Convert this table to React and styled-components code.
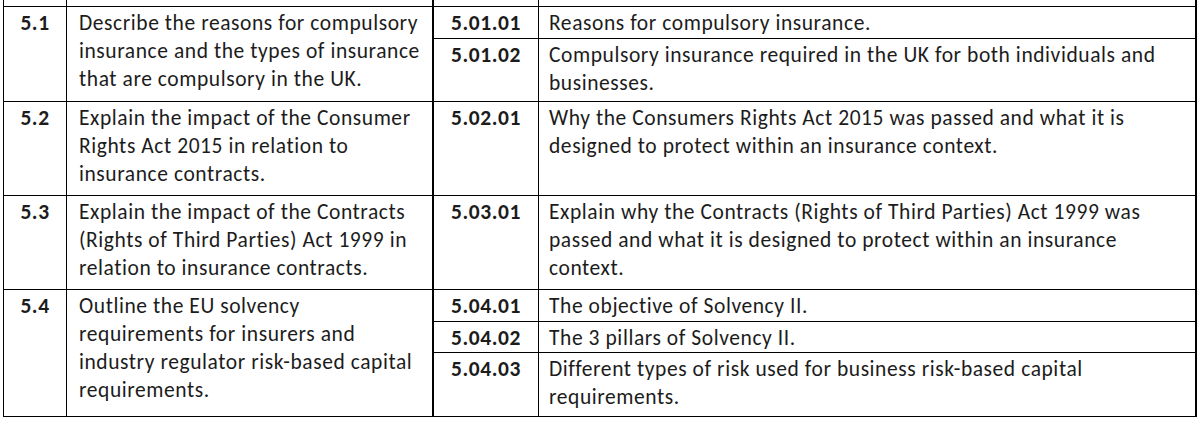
import React from 'react';
import styled, { createGlobalStyle } from 'styled-components';

const rows = [
    {
        id: '5.1',
        text: 'Describe the reasons for compulsory insurance and the types of insurance that are compulsory in the UK.',
        items: [
            { code: '5.01.01', text: 'Reasons for compulsory insurance.', h: 32 },
            { code: '5.01.02', text: 'Compulsory insurance required in the UK for both individuals and businesses.', h: 62 }
        ]
    },
    {
        id: '5.2',
        text: 'Explain the impact of the Consumer Rights Act 2015 in relation to insurance contracts.',
        items: [
            { code: '5.02.01', text: 'Why the Consumers Rights Act 2015 was passed and what it is designed to protect within an insurance context.', h: 93 }
        ]
    },
    {
        id: '5.3',
        text: 'Explain the impact of the Contracts (Rights of Third Parties) Act 1999 in relation to insurance contracts.',
        items: [
            { code: '5.03.01', text: 'Explain why the Contracts (Rights of Third Parties) Act 1999 was passed and what it is designed to protect within an insurance context.', h: 93 }
        ]
    },
    {
        id: '5.4',
        text: 'Outline the EU solvency requirements for insurers and industry regulator risk-based capital requirements.',
        items: [
            { code: '5.04.01', text: 'The objective of Solvency II.', h: 32 },
            { code: '5.04.02', text: 'The 3 pillars of Solvency II.', h: 31 },
            { code: '5.04.03', text: 'Different types of risk used for business risk-based capital requirements.', h: 63 }
        ]
    }
];

export default function App() {
    return (
        <>
            <GlobalStyle />
            <Table>
                <Stub>
                    <StubCell />
                    <StubCell $w={367} $thick />
                    <StubCell $w={105} />
                    <StubCell $w={658} $thick />
                </Stub>
                {rows.map(row => (
                    <Row key={row.id}>
                        <Num>{row.id}</Num>
                        <Outcome>{row.text}</Outcome>
                        <Items>
                            {row.items.map(item => (
                                <Item key={item.code} $h={item.h}>
                                    <Code>{item.code}</Code>
                                    <Detail>{item.text}</Detail>
                                </Item>
                            ))}
                        </Items>
                    </Row>
                ))}
            </Table>
        </>
    );
}

const GlobalStyle = createGlobalStyle`
    * {
        box-sizing: border-box;
    }
    body {
        margin: 0;
        background: #ffffff;
        font-family: Carlito, Lato, "Liberation Sans", sans-serif;
        color: #1c1c1c;
    }
`;

const Table = styled.div`
    margin-left: 3px;
    width: 1194px;
    border-left: 1px solid #000;
    font-size: 21.5px;
    letter-spacing: 0.57px;
    line-height: 28px;
`;

const Stub = styled.div`
    display: flex;
    height: 7px;
    border-bottom: 1px solid #000;
`;

const StubCell = styled.div`
    width: ${props => props.$w || 63}px;
    border-right: ${props => (props.$thick ? 2 : 1)}px solid #000;
`;

const Row = styled.div`
    display: grid;
    grid-template-columns: 63px 367px 1fr;
    border-bottom: 1px solid #000;
`;

const Num = styled.div`
    border-right: 1px solid #000;
    font-weight: 700;
    text-align: center;
    padding-top: 2px;
`;

const Outcome = styled.div`
    border-right: 2px solid #000;
    padding: 2px 8px 0 12px;
`;

const Items = styled.div`
    display: flex;
    flex-direction: column;
`;

const Item = styled.div`
    display: grid;
    grid-template-columns: 105px 658px;
    min-height: ${props => props.$h}px;
    border-bottom: 1px solid #000;

    &:last-child {
        border-bottom: none;
        flex: 1;
    }
`;

const Code = styled.div`
    border-right: 1px solid #000;
    font-weight: 700;
    text-align: center;
    padding-top: 2px;
`;

const Detail = styled.div`
    border-right: 2px solid #000;
    padding: 2px 10px 0 10px;
`;
